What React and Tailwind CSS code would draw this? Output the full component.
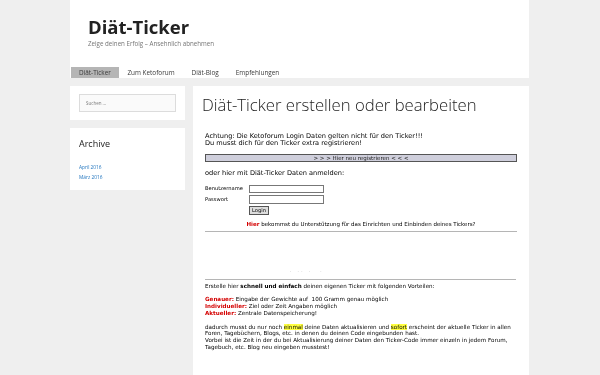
import React from "react";

const os = { fontFamily: '"Open Sans", "Noto Sans", sans-serif' };
const dv = { fontFamily: '"DejaVu Sans", Verdana, sans-serif' };

export default function App() {
  return (
    <div className="min-h-[375px] bg-[#efefef] overflow-hidden" style={os}>
      <div className="ml-[70px] w-[459px] [will-change:transform]">
        <header className="bg-white h-[65px] pl-[18px] pt-[15px]">
          <div className="text-[18.5px] font-bold text-[#222] leading-[24px]">Diät-Ticker</div>
          <div className="text-[6.2px] text-[#757575] leading-[8px] mt-[1px]">Zeige deinen Erfolg – Ansehnlich abnehmen</div>
        </header>
        <nav className="bg-white h-[13px] flex items-stretch text-[6.4px] text-[#3a3a3a]">
          <div className="flex items-center h-[11px] mt-[2px] px-[8px] bg-[#b5b5b5] text-[#3a3a3a] ml-px">Diät-Ticker</div>
          <div className="flex items-center px-[8.5px] mt-[2px]">Zum Ketoforum</div>
          <div className="flex items-center px-[8.5px] mt-[2px]">Diät-Blog</div>
          <div className="flex items-center px-[8.5px] mt-[2px]">Empfehlungen</div>
        </nav>
        <div className="flex gap-[8px] mt-[8px] items-start">
          <aside className="w-[115px] flex flex-col gap-[8px]">
            <div className="bg-white h-[34px] px-[9px] pt-[8px]">
              <div className="h-[18px] border border-[#dcdcdc] bg-[#fafafa] text-[4.5px] text-[#777] flex items-center pl-[6px]">Suchen …</div>
            </div>
            <div className="bg-white h-[62px] px-[9px] pt-[10px]">
              <div className="text-[9px] text-[#222] leading-[12px]">Archive</div>
              <div className="mt-[12px] text-[4.8px] text-[#1e73be] leading-[10px]">
                <div>April 2016</div>
                <div>März 2016</div>
              </div>
            </div>
          </aside>
          <main className="w-[336px] bg-white h-[300px] pt-[8px] pl-[9px] pr-[11px]">
            <h1 className="text-[16.7px] font-light text-[#222] leading-[22px]">Diät-Ticker erstellen oder bearbeiten</h1>
            <div className="mt-[17px] pl-[3px] text-black" style={dv}>
              <div className="text-[6.6px] leading-[7px]">
                <div>Achtung: Die Ketoforum Login Daten gelten nicht für den Ticker!!!</div>
                <div>Du musst dich für den Ticker extra registrieren!</div>
              </div>
              <div className="mt-[7px] h-[8px] w-[312px] bg-[#cfcfdc] border border-[#555] text-[5.5px] leading-[6px] flex items-center justify-center text-[#222]">&gt; &gt; &gt; Hier neu registrieren &lt; &lt; &lt;</div>
              <div className="mt-[7px] text-[6.6px] leading-[8px]">oder hier mit Diät-Ticker Daten anmelden:</div>
              <div className="mt-[8px] text-[5.2px] grid grid-cols-[44px_75px] gap-y-[2px] items-center">
                <div>Benutzername</div>
                <div className="h-[8px] border border-[#777] bg-white"></div>
                <div>Passwort</div>
                <div className="h-[9px] border border-[#777] bg-white"></div>
                <div></div>
                <div><span className="inline-block border border-[#555] bg-[#ddd] px-[2px] leading-[6.5px] text-[5.2px]">Login</span></div>
              </div>
              <div className="mt-[6px] text-[5.5px] text-center leading-[7px] w-[312px]"><span className="text-[#d40000] font-bold">Hier</span> bekommst du Unterstützung für das Einrichten und Einbinden deines Tickers?</div>
              <div className="mt-[3px] h-px w-[312px] bg-[#b5b5b5]"></div>
              <div className="h-[42px] flex items-end pl-[85px] w-[312px] text-[4px] text-[#999] leading-[4px] tracking-[2.5px]">· ·· ·&nbsp; ·</div>
              <div className="mt-[5px] h-px w-[311px] bg-[#b5b5b5]"></div>
              <div className="mt-[3px] text-[5.6px] leading-[6.8px] pr-[2px]">
                <div>Erstelle hier <b>schnell und einfach</b> deinen eigenen Ticker mit folgenden Vorteilen:</div>
                <div className="h-[6.8px]"></div>
                <div><b className="text-[#d40000]">Genauer:</b> Eingabe der Gewichte auf&nbsp; 100 Gramm genau möglich</div>
                <div><b className="text-[#d40000]">Individueller:</b> Ziel oder Zeit Angaben möglich</div>
                <div><b className="text-[#d40000]">Aktueller:</b> Zentrale Datenspeicherung!</div>
                <div className="h-[6.8px]"></div>
                <div>dadurch musst du nur noch <span className="bg-[#ffff40]">einmal</span> deine Daten aktualisieren und <span className="bg-[#ffff40]">sofort</span> erscheint der aktuelle Ticker in allen<br />Foren, Tagebüchern, Blogs, etc. in denen du deinen Code eingebunden hast.</div>
                <div>Vorbei ist die Zeit in der du bei Aktualisierung deiner Daten den Ticker-Code immer einzeln in jedem Forum,<br />Tagebuch, etc. Blog neu eingeben musstest!</div>
              </div>
            </div>
          </main>
        </div>
      </div>
    </div>
  );
}
